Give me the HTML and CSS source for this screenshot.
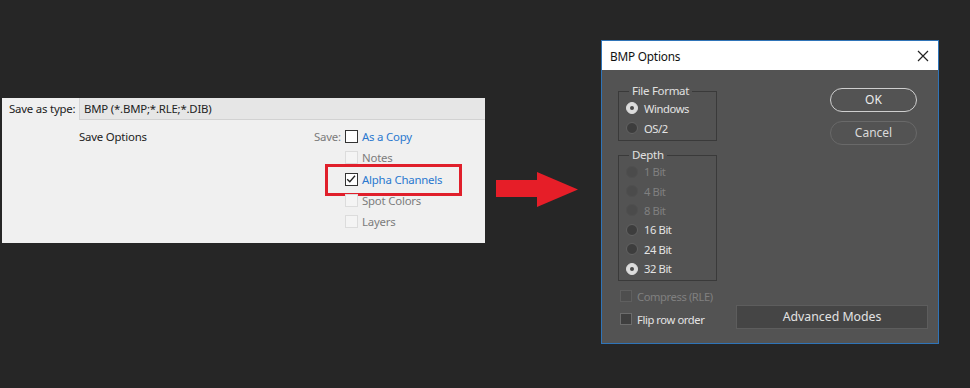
FILE: index.html
```html
<!DOCTYPE html>
<html>
<head>
<meta charset="utf-8">
<link rel="stylesheet" href="styles.css">
</head>
<body>
<div class="stage">
  <div class="save-panel">
    <div class="type-row">
      <div class="type-label">Save as type:</div>
      <div class="type-field">BMP (*.BMP;*.RLE;*.DIB)</div>
    </div>
    <div class="options">
      <div class="options-title">Save Options</div>
      <div class="save-label">Save:</div>
      <div class="checks">
        <div class="check-row"><span class="cb cb-on"></span><span class="lbl lbl-blue">As a Copy</span></div>
        <div class="check-row"><span class="cb cb-dis"></span><span class="lbl lbl-dis">Notes</span></div>
        <div class="check-row highlighted"><span class="cb cb-on"><svg viewBox="0 0 12 12" width="12" height="12"><path d="M2.2 6.2 L4.8 8.8 L10 2.8" fill="none" stroke="#222" stroke-width="1.3"/></svg></span><span class="lbl lbl-blue">Alpha Channels</span><span class="red-box"></span></div>
        <div class="check-row"><span class="cb cb-dis"></span><span class="lbl lbl-dis">Spot Colors</span></div>
        <div class="check-row"><span class="cb cb-dis"></span><span class="lbl lbl-dis">Layers</span></div>
      </div>
    </div>
  </div>

  <svg class="arrow" width="82" height="36" viewBox="0 0 82 36">
    <polygon points="0,8 41,8 41,0 82,17.5 41,35 41,25 0,25" fill="#e61e28"/>
  </svg>

  <div class="dialog">
    <div class="titlebar">
      <span class="title">BMP Options</span>
      <svg class="close" width="12" height="12" viewBox="0 0 12 12"><path d="M1 1 L11 11 M11 1 L1 11" stroke="#222" stroke-width="1.2"/></svg>
    </div>
    <div class="dbody">
      <div class="top">
        <div class="groups">
          <fieldset class="group g-format">
            <legend>File Format</legend>
            <div class="radio-row"><span class="rd rd-sel"></span><span class="rt">Windows</span></div>
            <div class="radio-row"><span class="rd"></span><span class="rt">OS/2</span></div>
          </fieldset>
          <fieldset class="group g-depth">
            <legend>Depth</legend>
            <div class="radio-row d"><span class="rd rd-dis"></span><span class="rt rt-dis">1 Bit</span></div>
            <div class="radio-row d"><span class="rd rd-dis"></span><span class="rt rt-dis">4 Bit</span></div>
            <div class="radio-row d"><span class="rd rd-dis"></span><span class="rt rt-dis">8 Bit</span></div>
            <div class="radio-row d"><span class="rd"></span><span class="rt">16 Bit</span></div>
            <div class="radio-row d"><span class="rd"></span><span class="rt">24 Bit</span></div>
            <div class="radio-row d"><span class="rd rd-sel"></span><span class="rt">32 Bit</span></div>
          </fieldset>
        </div>
        <div class="buttons">
          <div class="pill pill-ok">OK</div>
          <div class="pill pill-cancel">Cancel</div>
        </div>
      </div>
      <div class="bottom">
        <div class="bchecks">
          <div class="bcheck"><span class="dcb dcb-dis"></span><span class="rt rt-dis">Compress (RLE)</span></div>
          <div class="bcheck"><span class="dcb"></span><span class="rt">Flip row order</span></div>
        </div>
        <div class="adv">Advanced Modes</div>
      </div>
    </div>
  </div>
</div>
</body>
</html>
```

FILE: styles.css
```css
html, body {
  margin: 0;
  padding: 0;
  background: #262626;
}
body {
  width: 970px;
  height: 388px;
  overflow: hidden;
  font-family: "Noto Sans", "Open Sans", sans-serif;
  font-size: 12px;
}
.stage {
  display: flex;
  align-items: flex-start;
}

/* Left save panel */
.save-panel {
  margin: 98px 0 0 2px;
  width: 483px;
  height: 145px;
  background: #f0f0f0;
  color: #1a1a1a;
  font-size: 11.4px;
}
.type-row {
  display: flex;
  height: 22px;
  align-items: stretch;
}
.type-label {
  width: 70px;
  padding-left: 7px;
  line-height: 22px;
  color: #222;
  white-space: nowrap;
  letter-spacing: -0.2px;
}
.type-field {
  flex: 1;
  background: #e6e6e6;
  border-left: 1px solid #d6d6d6;
  border-bottom: 1px solid #d2d2d2;
  padding-left: 4px;
  line-height: 21px;
  color: #222;
  letter-spacing: -0.2px;
}
.options {
  display: flex;
  align-items: flex-start;
  padding: 6px 0 0 77px;
}
.options-title {
  width: 235px;
  line-height: 21px;
  color: #222;
  letter-spacing: -0.2px;
}
.save-label {
  width: 31px;
  line-height: 21px;
  color: #7a7a7a;
  letter-spacing: -0.2px;
}
.checks {
  display: flex;
  flex-direction: column;
}
.check-row {
  position: relative;
  display: flex;
  align-items: center;
  height: 21.3px;
}
.cb {
  box-sizing: border-box;
  width: 13px;
  height: 13px;
  margin-right: 4px;
  display: inline-flex;
}
.cb-on {
  border: 1px solid #333;
  background: #fff;
}
.cb-on svg {
  margin: -1px 0 0 -1px;
  width: 12px;
  height: 12px;
}
.cb-dis {
  border: 1px solid #dcdcdc;
  background: #f4f4f4;
}
.lbl {
  letter-spacing: -0.2px;
}
.lbl-blue { color: #2a78cf; }
.lbl-dis { color: #7c7c7c; }
.red-box {
  position: absolute;
  left: -20px;
  top: -5px;
  width: 137px;
  height: 32px;
  box-sizing: border-box;
  border: 3px solid #e01f2b;
}

/* Arrow */
.arrow {
  display: block;
  margin: 172px 0 0 11px;
}

/* Dialog */
.dialog {
  margin: 40px 0 0 23px;
  width: 338px;
  height: 304px;
  box-sizing: border-box;
  border: 1px solid #2f74b8;
  background: #535353;
  display: flex;
  flex-direction: column;
}
.titlebar {
  height: 29px;
  background: #ffffff;
  display: flex;
  align-items: center;
  justify-content: space-between;
  padding: 0 9px 0 8px;
}
.title {
  color: #111;
  font-size: 11.8px;
  letter-spacing: -0.2px;
}
.close { display: block; }
.dbody {
  flex: 1;
  display: flex;
  flex-direction: column;
  color: #e2e2e2;
}
.top {
  display: flex;
  align-items: flex-start;
}
.groups {
  margin-left: 16px;
  width: 99px;
}
.group {
  margin: 0;
  padding: 0 0 2px 7px;
  border: 1px solid #3a3a3a;
  min-width: 0;
  box-sizing: border-box;
  width: 99px;
}
.group legend {
  padding: 0 3px;
  margin-left: 3px;
  line-height: 14px;
  font-size: 11.5px;
  color: #e0e0e0;
  letter-spacing: -0.3px;
}
.g-format { margin-top: 14px; }
.g-depth { margin-top: 7px; }
.radio-row {
  display: flex;
  align-items: center;
  height: 20px;
}
.radio-row.d { height: 19.4px; }
.rd {
  box-sizing: border-box;
  width: 12px;
  height: 12px;
  border-radius: 50%;
  background: #3d3d3d;
  border: 1px solid #626262;
  margin-right: 6px;
  display: inline-flex;
  align-items: center;
  justify-content: center;
}
.rd-sel {
  background: #dcdcdc;
  border-color: #dcdcdc;
}
.rd-sel::after {
  content: "";
  width: 4px;
  height: 4px;
  border-radius: 50%;
  background: #4a4a4a;
}
.rd-dis {
  background: #4b4b4b;
  border-color: #4f4f4f;
}
.rt {
  color: #e4e4e4;
  letter-spacing: -0.4px;
  font-size: 11.2px;
}
.rt-dis { color: #808080; }
.buttons {
  margin: 18px 21px 0 auto;
  width: 87px;
  display: flex;
  flex-direction: column;
  gap: 9px;
}
.pill {
  box-sizing: border-box;
  height: 24px;
  border-radius: 12px;
  text-align: center;
  line-height: 21px;
  font-size: 12px;
}
.pill-ok {
  border: 1.5px solid #cfcfcf;
  color: #ececec;
}
.pill-cancel {
  border: 1.5px solid #696969;
  color: #dadada;
}
.bottom {
  display: flex;
  align-items: flex-start;
  margin-top: 5px;
}
.bchecks {
  margin-left: 18px;
  display: flex;
  flex-direction: column;
  gap: 3px;
}
.bcheck {
  display: flex;
  align-items: center;
  height: 20px;
}
.dcb {
  box-sizing: border-box;
  width: 12px;
  height: 12px;
  border: 1px solid #6c6c6c;
  background: #3f3f3f;
  margin-right: 5px;
}
.dcb-dis {
  border-color: #5f5f5f;
  background: #4e4e4e;
}
.adv {
  margin: 19px 10px 0 auto;
  width: 192px;
  height: 24px;
  box-sizing: border-box;
  background: #454545;
  border: 1px solid #5d5d5d;
  text-align: center;
  line-height: 22px;
  color: #e2e2e2;
  font-size: 12.3px;
}
```
